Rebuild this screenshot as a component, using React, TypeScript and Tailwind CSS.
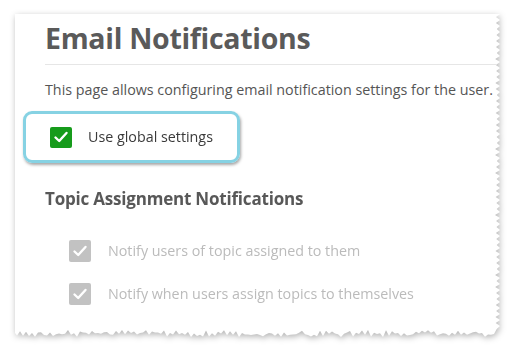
import React from 'react';

// jagged "torn paper" outline for the right and bottom edges
const tornPath = (w: number, h: number) => {
  let seed = 7;
  const rnd = () => {
    seed = (seed * 9301 + 49297) % 233280;
    return seed / 233280;
  };
  const pts: string[] = ['0px 0px'];
  // right edge, top to bottom
  for (let y = 0; y <= h - 8; y += 3) {
    const x = w - (y % 6 < 3 ? 0 : 3 + rnd() * 2);
    pts.push(`${x.toFixed(1)}px ${y.toFixed(1)}px`);
  }
  // bottom edge, right to left
  for (let x = w - 6; x >= 0; x -= 3) {
    const y = h - (rnd() * 5 + (Math.round(x / 3) % 2 ? 0 : 2));
    pts.push(`${x.toFixed(1)}px ${y.toFixed(1)}px`);
  }
  pts.push(`0px ${h - 4}px`);
  return `polygon(${pts.join(', ')})`;
};

const Check = ({ className }: { className: string }) => (
  <span className={`flex items-center justify-center rounded-[2px] ${className}`}>
    <svg width="16" height="14" viewBox="0 0 16 14" fill="none">
      <path d="M2.5 7.5 L6.2 11 L13.5 3" stroke="white" strokeWidth="2.4" strokeLinecap="round" strokeLinejoin="round" />
    </svg>
  </span>
);

const Option = ({ label }: { label: string }) => (
  <label className="flex items-center gap-[17px] h-[22px]">
    <Check className="w-[22px] h-[22px] bg-[#c2c2c2]" />
    <span className="text-[14.3px] text-[#bbbbbb] whitespace-nowrap">{label}</span>
  </label>
);

export default function App() {
  const clip = tornPath(485, 323);
  return (
    <div className="w-[526px] h-[354px] bg-white overflow-hidden pl-[15px] pt-[14px] font-['Open_Sans',sans-serif]">
      <div className="w-[485px] h-[323px]" style={{ filter: 'drop-shadow(1px 2px 3px rgba(0,0,0,0.3))' }}>
        <div className="w-full h-full bg-white pl-[30px] pr-[10px] pt-[6px]" style={{ clipPath: clip }}>
          <h1 className="text-[28.5px] leading-[36px] font-bold text-[#5a5a5a] tracking-[-0.3px]">Email Notifications</h1>
          <div className="h-px bg-[#e6e6e6] mt-[8px] mr-[-10px]" />
          <p className="mt-[15px] text-[14.3px] leading-[20px] text-[#555] whitespace-nowrap">
            This page allows configuring email notification settings for the user.
          </p>
          <div className="ml-[-22px] mt-[11px] w-[217px] h-[52px] rounded-[9px] border-[3px] border-[#86d2e3] shadow-[1px_2px_3px_rgba(0,0,0,0.35)] flex items-center pl-[24px] gap-[16px]">
            <Check className="w-[22px] h-[21px] bg-[#169b1b]" />
            <span className="text-[14.3px] text-[#3a3a3a]">Use global settings</span>
          </div>
          <h2 className="mt-[24px] text-[17px] leading-[24px] font-bold text-[#585858] tracking-[-0.2px]">Topic Assignment Notifications</h2>
          <div className="mt-[29px] ml-[24px] flex flex-col gap-[21px]">
            <Option label="Notify users of topic assigned to them" />
            <Option label="Notify when users assign topics to themselves" />
          </div>
        </div>
      </div>
    </div>
  );
}
